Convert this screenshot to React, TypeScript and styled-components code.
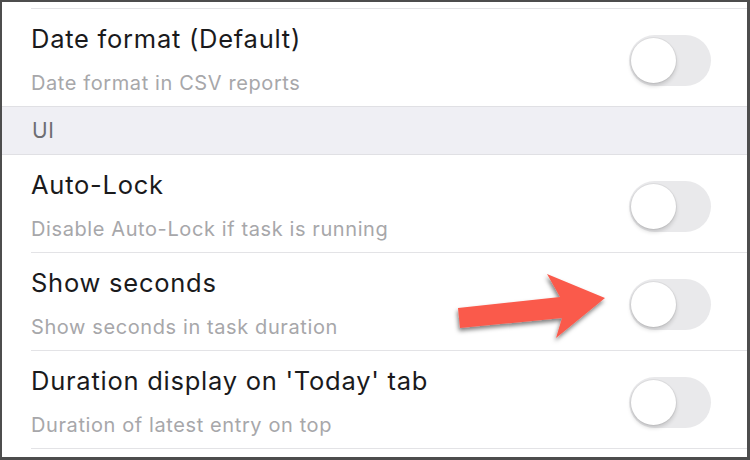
import React from "react";
import styled, { createGlobalStyle } from "styled-components";

const Global = createGlobalStyle`
  html, body { margin: 0; padding: 0; background: #ffffff; }
  body { font-family: Inter, "Noto Sans", sans-serif; -webkit-font-smoothing: antialiased; }
`;

const Stage = styled.div`
  position: relative;
  width: 750px;
  height: 460px;
  overflow: hidden;
`;

const Frame = styled.div`
  box-sizing: border-box;
  width: 750px;
  height: 460px;
  border-style: solid;
  border-color: #4d4d4d;
  border-width: 2px 3px 3px 2px;
  background: #ffffff;
  overflow: hidden;
  display: flex;
  flex-direction: column;
`;

const CutCell = styled.div`
  padding-left: 29px;
  flex: none;
`;

const CutInner = styled.div`
  height: 6px;
  border-bottom: 1px solid #e3e3e6;
`;

const Row = styled.div`
  padding-left: 29px;
  flex: none;
`;

const RowInner = styled.div<{ $noBorder?: boolean }>`
  box-sizing: border-box;
  height: ${(p) => (p.$noBorder ? "97px" : "98px")};
  border-bottom: ${(p) => (p.$noBorder ? "none" : "1px solid #e3e3e6")};
  display: flex;
  align-items: flex-start;
  padding-right: 36px;
`;

const TextCol = styled.div`
  flex: 1;
  display: flex;
  flex-direction: column;
  padding-top: 15px;
`;

const Title = styled.div`
  font-size: 25.5px;
  line-height: 29px;
  color: #1a1a1c;
  letter-spacing: 0.75px;
`;

const Subtitle = styled.div`
  margin-top: 19px;
  font-size: 20px;
  line-height: 23px;
  color: #a7a7aa;
  letter-spacing: 0.6px;
`;

const SectionHeader = styled.div`
  box-sizing: border-box;
  flex: none;
  height: 49px;
  background: #efeff4;
  border-top: 1px solid #e0e0e4;
  border-bottom: 1px solid #e0e0e4;
  padding-left: 30px;
  display: flex;
  align-items: center;
  font-size: 21px;
  color: #6d6d72;
  letter-spacing: 0.5px;
`;

const Track = styled.div`
  flex: none;
  margin-top: 26px;
  width: 82px;
  height: 51px;
  border-radius: 26px;
  background: #e9e9eb;
  position: relative;
`;

const Knob = styled.div`
  position: absolute;
  left: 2px;
  top: 3px;
  width: 45px;
  height: 45px;
  border-radius: 50%;
  background: #ffffff;
  box-shadow: 0 3px 4px rgba(0, 0, 0, 0.16), 0 0 0 1px rgba(0, 0, 0, 0.05);
`;

const ArrowSvg = styled.svg`
  position: absolute;
  left: 0;
  top: 0;
  pointer-events: none;
  overflow: visible;
`;

const Toggle = () => (
  <Track>
    <Knob />
  </Track>
);

type SettingProps = { title: string; subtitle: string; noBorder?: boolean };

const Setting = ({ title, subtitle, noBorder }: SettingProps) => (
  <Row>
    <RowInner $noBorder={noBorder}>
      <TextCol>
        <Title>{title}</Title>
        <Subtitle>{subtitle}</Subtitle>
      </TextCol>
      <Toggle />
    </RowInner>
  </Row>
);

export default function App() {
  return (
    <>
      <Global />
      <Stage>
        <Frame>
          <CutCell>
            <CutInner />
          </CutCell>
          <Setting title="Date format (Default)" subtitle="Date format in CSV reports" noBorder />
          <SectionHeader>UI</SectionHeader>
          <Setting title="Auto-Lock" subtitle="Disable Auto-Lock if task is running" />
          <Setting title="Show seconds" subtitle="Show seconds in task duration" />
          <Setting title="Duration display on 'Today' tab" subtitle="Duration of latest entry on top" />
        </Frame>
        <ArrowSvg width="750" height="460" viewBox="0 0 750 460">
          <defs>
            <filter id="arrowShadow" x="-20%" y="-30%" width="140%" height="170%">
              <feDropShadow dx="-1" dy="3" stdDeviation="2" floodColor="#000" floodOpacity="0.5" />
            </filter>
          </defs>
          <polygon
            points="458,308 560,297 547,274 605,298 556,338 562,318 460,328"
            fill="#fa5a4c"
            filter="url(#arrowShadow)"
          />
        </ArrowSvg>
      </Stage>
    </>
  );
}
